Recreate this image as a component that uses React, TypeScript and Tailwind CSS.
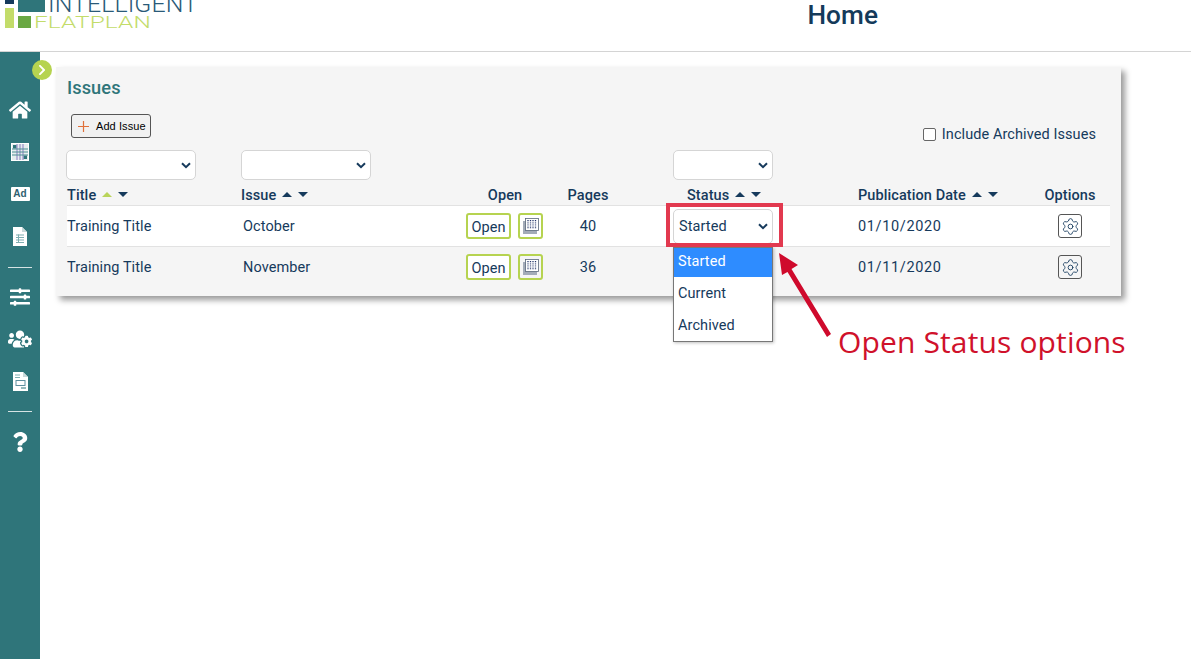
import { Settings } from "lucide-react";
import { FaHome, FaSlidersH, FaUsersCog, FaQuestion, FaChevronRight } from "react-icons/fa";

const navy = "#163a5c";

function Sort({ lime }: { lime?: boolean }) {
  return (
    <span className="inline-flex items-center gap-[6px] ml-[6px] mb-[3px] align-middle">
      <svg width="10" height="5" viewBox="0 0 10 5"><path d="M0 5 L5 0 L10 5 Z" fill={lime ? "#b9d45a" : navy} /></svg>
      <svg width="10" height="5" viewBox="0 0 10 5"><path d="M0 0 L10 0 L5 5 Z" fill={navy} /></svg>
    </span>
  );
}

function Chevron() {
  return (
    <svg width="10" height="7" viewBox="0 0 10 7" fill="none"><path d="M1 1.2 L5 5.2 L9 1.2" stroke={navy} strokeWidth="2" /></svg>
  );
}

function Select({ className, label }: { className: string; label?: string }) {
  return (
    <div className={`h-[30px] flex items-center justify-between bg-white border border-[#d5d5d5] rounded-[5px] pl-[5px] pr-[4px] ${className}`}>
      <span className="mt-[2px]">{label}</span>
      <Chevron />
    </div>
  );
}

function GridIcon() {
  return (
    <svg width="18" height="18" viewBox="0 0 18 18">
      <rect width="18" height="18" fill="#fff" />
      <rect x="1" y="1" width="16" height="16" fill="#e6eeee" />
      <rect x="2" y="2" width="3.5" height="3.5" fill="#2f757a" />
      <rect x="12.5" y="12.5" width="3.5" height="3.5" fill="#2f757a" />
      <path d="M6 1v16M9 1v16M12 1v16" stroke="#8a7cc0" strokeWidth="1" />
      <path d="M1 6h16M1 9h16M1 12h16" stroke="#4f8f94" strokeWidth="1" />
    </svg>
  );
}

function AdIcon() {
  return (
    <div className="w-[19px] h-[14px] bg-white rounded-[1px] flex items-center justify-center text-[10px] font-bold leading-none text-[#2f5f70] [font-family:'Liberation_Sans',sans-serif]">
      Ad
    </div>
  );
}

function DocIcon() {
  return (
    <svg width="14" height="19" viewBox="0 0 14 19">
      <path d="M0 0 H9 L14 5 V19 H0 Z" fill="#fff" />
      <path d="M9 0 L14 5 H9 Z" fill="#c9d9da" />
      <path d="M3 8h8M3 10.5h8M3 13h8M3 15.5h8" stroke="#7faeb1" strokeWidth="1.2" />
      <path d="M5.5 7.5v8.5" stroke="#7faeb1" />
    </svg>
  );
}

function Doc2Icon() {
  return (
    <svg width="15" height="19" viewBox="0 0 15 19">
      <path d="M0 0 H10 L15 5 V19 H0 Z" fill="#fff" />
      <path d="M10 0 L15 5 H10 Z" fill="#c9d9da" />
      <path d="M2 3h5M2 5.5h5" stroke="#7faeb1" />
      <rect x="3" y="8.5" width="9" height="5" fill="none" stroke="#5f8f9f" />
      <path d="M8 16h5" stroke="#2f757a" />
    </svg>
  );
}

function PlanIcon() {
  return (
    <svg width="16" height="16" viewBox="0 0 16 16">
      <rect x="0" y="3" width="14" height="13" fill="#a3abb8" />
      <rect x="2.5" y="0.5" width="13" height="12" fill="#fff" stroke="#59667a" strokeWidth="0.8" />
      <path d="M5 2v9M7.5 2v9M10 2v9M12.5 2v9" stroke="#26376a" strokeWidth="1.3" strokeDasharray="1 0.8" />
      <path d="M4 5h10M4 8h10" stroke="#fff" strokeWidth="0.5" />
    </svg>
  );
}

function Logo() {
  return (
    <svg width="200" height="30" viewBox="0 0 200 30" className="block">
      <rect x="5" y="0" width="9" height="4" fill="#163a5c" />
      <rect x="18" y="0" width="27" height="12" fill="#2f757a" />
      <rect x="5" y="8" width="9" height="20" fill="#c3dc6a" />
      <rect x="18" y="16" width="13" height="12" fill="#6aa843" />
      <text x="48" y="12" fontFamily="Roboto, sans-serif" fontWeight="300" fontSize="24" fill="#2a5a78" textLength="150" lengthAdjust="spacingAndGlyphs">INTELLIGENT</text>
      <text x="34" y="28" fontFamily="Roboto, sans-serif" fontWeight="300" fontSize="17" fill="#c3dc6a" textLength="117" lengthAdjust="spacingAndGlyphs">FLATPLAN</text>
    </svg>
  );
}

const cols = "grid grid-cols-[174px_218px_92px_74px_233px_172px_80px]";

function Row({ issue, pages, date, alt }: { issue: string; pages: string; date: string; alt?: boolean }) {
  return (
    <div className={`${cols} items-center pt-[2px] ${alt ? "h-[40px]" : "h-[41px] bg-white border-b border-[#e2e2e2]"}`}>
      <div>Training Title</div>
      <div className="pl-[2px]">{issue}</div>
      <div className="flex items-center gap-[7px] pl-[7px] -mt-[2px]">
        <div className="w-[45px] h-[26px] pt-[3px] border-2 border-[#b6d350] rounded-[3px] bg-white flex items-center justify-center text-[14.5px] tracking-normal">Open</div>
        <div className="w-[25px] h-[26px] border-2 border-[#b6d350] rounded-[3px] flex items-center justify-center">
          <PlanIcon />
        </div>
      </div>
      <div className="text-center">{pages}</div>
      <div className="pl-[48px] -mt-[2px]">
        {!alt && (
          <Select className="w-[100px] h-[35px]" label="Started" />
        )}
      </div>
      <div className="tracking-[0.65px]">{date}</div>
      <div className="flex justify-center -mt-[2px]">
        <div className="w-[24px] h-[24px] border border-[#555] rounded-[3px] flex items-center justify-center">
          <Settings size={19} strokeWidth={1.1} color={navy} />
        </div>
      </div>
    </div>
  );
}

export default function App() {
  return (
    <div className="relative h-[659px] w-[1191px] overflow-hidden bg-white text-[14.5px] tracking-[0.08px] text-[#163a5c] [font-family:Roboto,sans-serif]">
      <header className="h-[52px] border-b border-[#d4d4d4] flex justify-between pr-[313px]">
        <Logo />
        <h1 className="text-[26.2px] leading-[30px] font-medium text-[#143a5a]">Home</h1>
      </header>

      <div className="flex h-[607px]">
        <aside className="w-[40px] shrink-0 bg-[#2f757a] pt-[37px] flex flex-col items-center text-white">
          <div className="h-[42px] flex items-center"><FaHome size={22} /></div>
          <div className="h-[42px] flex items-center"><GridIcon /></div>
          <div className="h-[42px] flex items-center"><AdIcon /></div>
          <div className="h-[42px] flex items-center"><DocIcon /></div>
          <div className="w-[24px] h-px bg-[#d6e3e4] mt-[10px] mb-[8px]" />
          <div className="h-[42px] flex items-center"><FaSlidersH size={20} /></div>
          <div className="h-[42px] flex items-center"><FaUsersCog size={24} /></div>
          <div className="h-[42px] flex items-center"><Doc2Icon /></div>
          <div className="w-[24px] h-px bg-[#d6e3e4] mt-[9px] mb-[9px]" />
          <div className="h-[42px] flex items-center"><FaQuestion size={20} /></div>
        </aside>

        <main className="pl-[16px] pt-[15px]">
          <section className="w-[1065px] h-[229px] bg-[#f5f5f5] shadow-[4px_4px_6px_rgba(0,0,0,0.4)] pl-[11px] pr-[11px] pt-[10px]">
            <h2 className="text-[18.2px] leading-[22px] font-medium text-[#2f757a]">Issues</h2>
            <div className="flex justify-between pl-[4px] pr-[14px] pt-[15px] h-[51px]">
              <button className="h-[24px] w-[80px] border border-[#555] rounded-[3px] bg-[#f1f1f1] flex items-center gap-[7px] pl-[6px] text-[11px] text-black [font-family:'Liberation_Sans',sans-serif]">
                <svg width="11" height="11" viewBox="0 0 11 11"><path d="M5.5 0v11M0 5.5h11" stroke="#e0703a" strokeWidth="1.2" /></svg>
                Add Issue
              </button>
              <label className="flex items-center gap-[6px] h-[22px] mt-[10px]">
                <span className="w-[13px] h-[13px] bg-white border border-[#666] rounded-[2px] -mt-[2px]" />
                Include Archived Issues
              </label>
            </div>
            <div className={cols}>
              <Select className="w-[130px] -ml-[1px]" />
              <Select className="w-[130px]" />
              <div />
              <div />
              <div className="pl-[48px]"><Select className="w-[100px]" /></div>
              <div />
              <div />
            </div>
            <div className={`${cols} h-[26px] items-center pt-[5px] border-b border-[#e2e2e2] font-medium`}>
              <div>Title<Sort lime /></div>
              <div>Issue<Sort /></div>
              <div className="text-center">Open</div>
              <div className="text-center">Pages</div>
              <div className="pl-[62px]">Status<Sort /></div>
              <div>Publication Date<Sort /></div>
              <div className="text-center">Options</div>
            </div>
            <Row issue="October" pages="40" date="01/10/2020" />
            <Row issue="November" pages="36" date="01/11/2020" alt />
          </section>
        </main>
      </div>

      {/* toggle */}
      <div className="absolute left-[32px] top-[60px] w-[20px] h-[20px] rounded-full bg-[#b6d350] flex items-center justify-center text-white">
        <FaChevronRight size={12} />
      </div>

      {/* open dropdown */}
      <div className="absolute left-[673px] top-[247px] w-[100px] h-[95px] bg-white border border-[#777] shadow-[1px_1px_3px_rgba(0,0,0,0.25)]">
        <div className="h-[29px] pb-[2px] mb-[1px] bg-[#2e8cff] text-white flex items-center pl-[4px]">Started</div>
        <div className="h-[32px] flex items-center pl-[4px]">Current</div>
        <div className="h-[32px] flex items-center pl-[4px]">Archived</div>
      </div>

      {/* annotation */}
      <div className="absolute left-[666px] top-[203px] w-[117px] h-[44px] border-[4px] border-[#e2394f]" />
      <svg className="absolute left-[770px] top-[245px]" width="70" height="100" viewBox="770 245 70 100">
        <path d="M779 253 L798 265 L791.5 269 L831 334 L827 337 L787.5 272 L782 275 Z" fill="#cf0a2c" />
      </svg>
      <div className="absolute left-[838px] top-[322px] text-[30px] leading-[40px] tracking-[0.14px] text-[#d0112b] whitespace-nowrap [font-family:'Open_Sans',sans-serif]">
        Open Status options
      </div>
    </div>
  );
}
